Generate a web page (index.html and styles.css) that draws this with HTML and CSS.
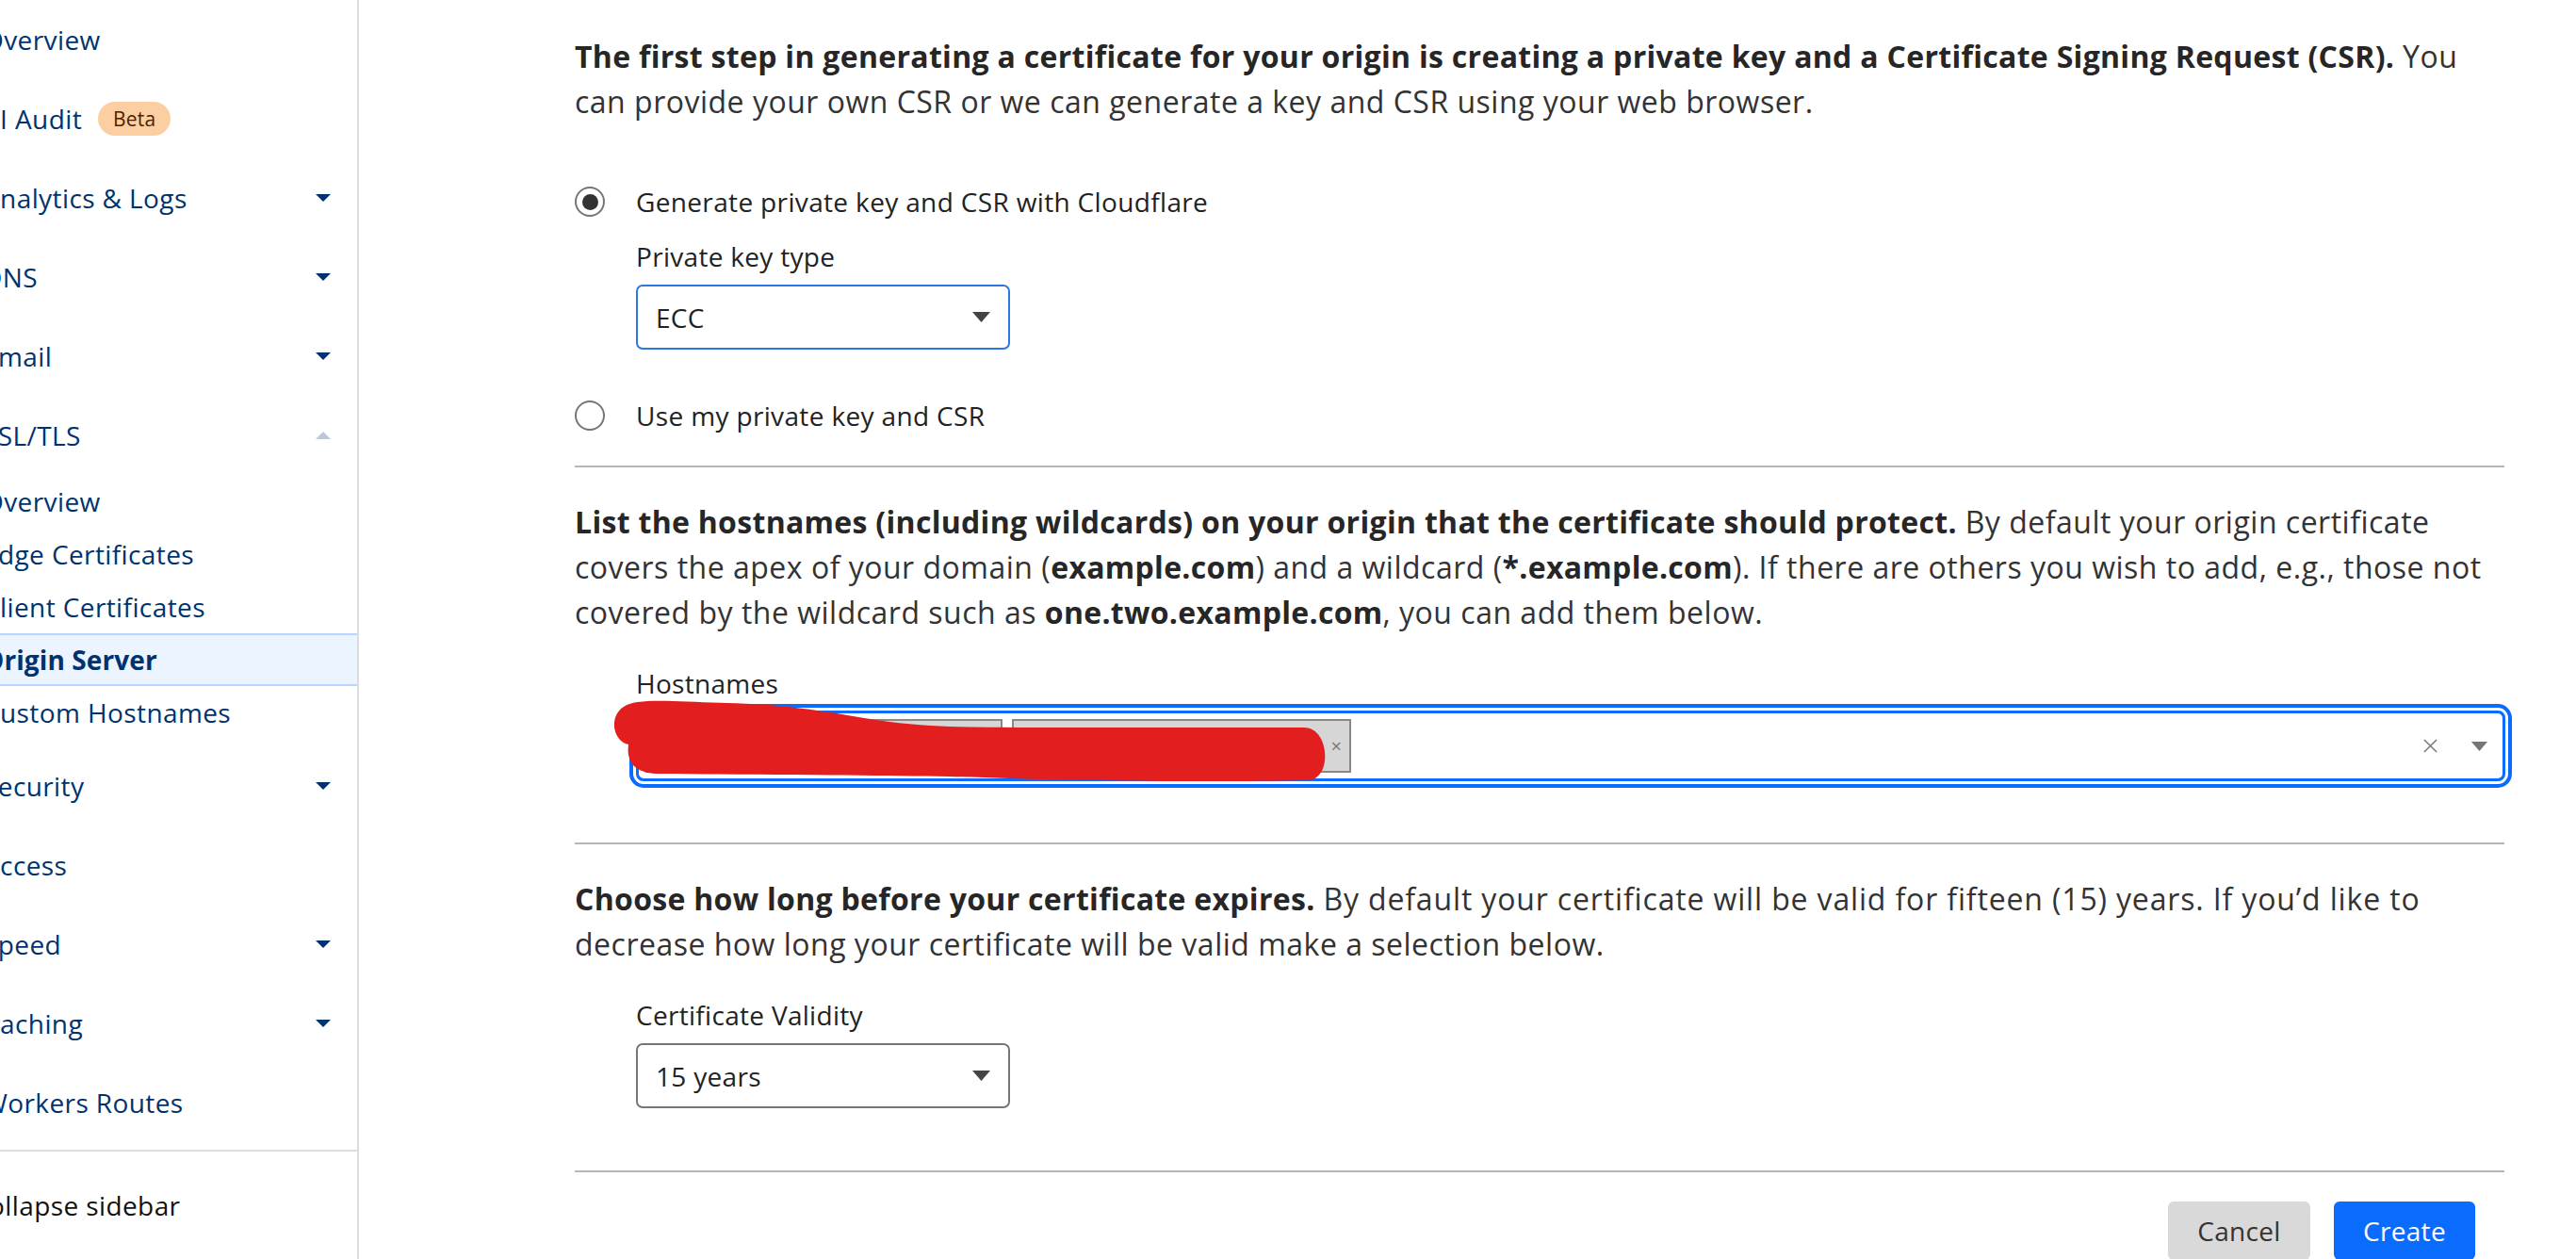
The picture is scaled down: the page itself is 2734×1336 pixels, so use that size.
FILE: index.html
```html
<!DOCTYPE html>
<html lang="en">
<head>
<meta charset="utf-8">
<title>Origin Server</title>
<link rel="stylesheet" href="styles.css">
</head>
<body>
<div class="app">
  <aside class="sidebar">
    <nav class="nav">
      <div class="nav-item"><span class="nav-label">Overview</span></div>
      <div class="nav-item"><span class="nav-label">AI Audit<span class="badge">Beta</span></span></div>
      <div class="nav-item"><span class="nav-label">Analytics &amp; Logs</span><svg class="caret" viewBox="0 0 16 8"><polygon points="0,0 16,0 8,8"/></svg></div>
      <div class="nav-item"><span class="nav-label">DNS</span><svg class="caret" viewBox="0 0 16 8"><polygon points="0,0 16,0 8,8"/></svg></div>
      <div class="nav-item"><span class="nav-label">Email</span><svg class="caret" viewBox="0 0 16 8"><polygon points="0,0 16,0 8,8"/></svg></div>
      <div class="nav-item"><span class="nav-label">SSL/TLS</span><svg class="caret caret-up" viewBox="0 0 16 8"><polygon points="0,8 16,8 8,0"/></svg></div>
      <div class="subnav">
        <div class="sub-item"><span class="nav-label">Overview</span></div>
        <div class="sub-item"><span class="nav-label">Edge Certificates</span></div>
        <div class="sub-item"><span class="nav-label">Client Certificates</span></div>
        <div class="sub-item active"><span class="nav-label">Origin Server</span></div>
        <div class="sub-item"><span class="nav-label">Custom Hostnames</span></div>
      </div>
      <div class="nav-item"><span class="nav-label">Security</span><svg class="caret" viewBox="0 0 16 8"><polygon points="0,0 16,0 8,8"/></svg></div>
      <div class="nav-item"><span class="nav-label">Access</span></div>
      <div class="nav-item"><span class="nav-label">Speed</span><svg class="caret" viewBox="0 0 16 8"><polygon points="0,0 16,0 8,8"/></svg></div>
      <div class="nav-item"><span class="nav-label">Caching</span><svg class="caret" viewBox="0 0 16 8"><polygon points="0,0 16,0 8,8"/></svg></div>
      <div class="nav-item"><span class="nav-label">Workers Routes</span></div>
    </nav>
    <div class="sidebar-foot">
      <div class="nav-item collapse"><span class="nav-label">Collapse sidebar</span></div>
    </div>
  </aside>

  <main class="main">
    <div class="content">
      <p class="para"><strong>The first step in generating a certificate for your origin is creating a private key and a Certificate Signing Request (CSR).</strong> You can provide your own CSR or we can generate a key and CSR using your web browser.</p>

      <div class="radio-row first-radio">
        <span class="radio checked"></span>
        <span class="radio-label">Generate private key and CSR with Cloudflare</span>
      </div>
      <div class="field key-field">
        <div class="field-label">Private key type</div>
        <div class="select select-focus">
          <span class="select-value">ECC</span>
          <svg class="select-arrow" viewBox="0 0 19 11"><polygon points="0,0 19,0 9.5,11"/></svg>
        </div>
      </div>
      <div class="radio-row second-radio">
        <span class="radio"></span>
        <span class="radio-label">Use my private key and CSR</span>
      </div>

      <div class="divider div-1"></div>

      <p class="para para-gap"><strong>List the hostnames (including wildcards) on your origin that the certificate should protect.</strong> By default your origin certificate covers the apex of your domain (<strong>example.com</strong>) and a wildcard (<strong>*.example.com</strong>). If there are others you wish to add, e.g., those not covered by the wildcard such as <strong>one.two.example.com</strong>, you can add them below.</p>

      <div class="field host-field">
        <div class="field-label">Hostnames</div>
        <div class="multi-wrap">
          <div class="multi">
            <div class="chips">
              <span class="chip chip-a"></span>
              <span class="chip chip-b"><span class="chip-x">×</span></span>
            </div>
            <div class="multi-icons">
              <svg class="clear-x" viewBox="0 0 16 16"><path d="M1 1 L15 15 M15 1 L1 15"/></svg>
              <svg class="multi-arrow" viewBox="0 0 19 11"><polygon points="0,0 19,0 9.5,11"/></svg>
            </div>
          </div>
          <svg class="redact" viewBox="640 735 780 105" aria-hidden="true">
            <path d="M 662 750 C 676 740 720 745 770 746 C 830 747 870 754 930 764 C 990 773 1030 771 1080 772 L 1384 772 C 1412 772 1414 828 1388 828 C 1300 830 1160 829 1070 826 C 1000 823 900 823 700 821 C 678 821 664 812 667 790 C 650 786 646 760 662 750 Z"/>
          </svg>
        </div>
      </div>

      <div class="divider div-2"></div>

      <p class="para para-gap"><strong>Choose how long before your certificate expires.</strong> <span class="wide">By default your certificate will be valid for fifteen (15) years. If you’d like to</span> decrease how long your certificate will be valid make a selection below.</p>

      <div class="field validity-field">
        <div class="field-label">Certificate Validity</div>
        <div class="select">
          <span class="select-value">15 years</span>
          <svg class="select-arrow" viewBox="0 0 19 11"><polygon points="0,0 19,0 9.5,11"/></svg>
        </div>
      </div>

      <div class="divider div-3"></div>

      <div class="actions">
        <button class="btn btn-cancel">Cancel</button>
        <button class="btn btn-create">Create</button>
      </div>
    </div>
  </main>
</div>
</body>
</html>
```

FILE: styles.css
```css
* { box-sizing: border-box; }

html, body {
  margin: 0;
  padding: 0;
  height: 100%;
}

body {
  font-family: "Open Sans", "Noto Sans", sans-serif;
  background: #ffffff;
  overflow: hidden;
}

.app {
  display: flex;
  height: 1336px;
}

/* ---------- Sidebar ---------- */
.sidebar {
  width: 381px;
  flex: none;
  border-right: 2px solid #dcdcdc;
  overflow: hidden;
  display: flex;
  flex-direction: column;
}

.nav {
  display: flex;
  flex-direction: column;
}

.nav-item {
  height: 84px;
  display: flex;
  align-items: center;
  justify-content: space-between;
  padding-right: 28px;
  font-size: 28px;
  color: #00336e;
  white-space: nowrap;
}

.nav-label {
  margin-left: -18px;
  display: flex;
  align-items: center;
  letter-spacing: 0.4px;
}

.badge {
  margin-left: 17px;
  height: 36px;
  padding: 0 16px;
  border-radius: 18px;
  background: #fbcfa1;
  color: #4a2200;
  font-size: 21px;
  letter-spacing: 0.2px;
  display: inline-flex;
  align-items: center;
}

.caret {
  width: 16px;
  height: 8px;
  flex: none;
  fill: #00336e;
}

.caret-up {
  fill: #bcc8d8;
}

.subnav {
  display: flex;
  flex-direction: column;
  padding-bottom: 8px;
}

.sub-item {
  height: 56px;
  display: flex;
  align-items: center;
  font-size: 28px;
  color: #00336e;
  white-space: nowrap;
}

.sub-item.active {
  background: #ebf4ff;
  border-top: 2px solid #b7d5ff;
  border-bottom: 2px solid #b7d5ff;
  font-weight: 700;
}

.sub-item.active .nav-label {
  letter-spacing: 0.1px;
}

.sidebar-foot {
  margin-top: 8px;
  border-top: 2px solid #dcdcdc;
  padding-top: 15px;
}

.collapse {
  color: #111111;
}

.collapse .nav-label {
  margin-left: -30px;
}

/* ---------- Main ---------- */
.main {
  flex: 1;
  min-width: 0;
  padding: 36px 76px 0 229px;
}

.content {
  display: flex;
  flex-direction: column;
}

.para {
  margin: 0;
  font-size: 32px;
  line-height: 48px;
  color: #333333;
  letter-spacing: 0.5px;
}

.para strong {
  color: #262626;
  font-weight: 700;
  letter-spacing: 0.3px;
}

.para .wide {
  letter-spacing: 0.85px;
}

.para-gap {
  margin-top: 34px;
}

.radio-row {
  display: flex;
  align-items: center;
  gap: 33px;
  height: 48px;
}

.first-radio { margin-top: 58px; }
.second-radio { margin-top: 46px; }

.radio {
  width: 32px;
  height: 32px;
  flex: none;
  border: 2px solid #767676;
  border-radius: 50%;
  display: flex;
  align-items: center;
  justify-content: center;
}

.radio.checked::after {
  content: "";
  width: 17px;
  height: 17px;
  border-radius: 50%;
  background: #333333;
}

.radio-label {
  font-size: 28px;
  color: #222222;
  letter-spacing: 0.35px;
}

.field {
  margin-left: 65px;
  display: flex;
  flex-direction: column;
}

.key-field { margin-top: 14px; }
.host-field { margin-top: 31px; }
.validity-field { margin-top: 31px; }

.field-label {
  font-size: 28px;
  line-height: 40px;
  color: #222222;
  letter-spacing: 0.3px;
  margin-bottom: 10px;
}

.host-field .field-label {
  margin-bottom: 9px;
}

.select {
  width: 397px;
  height: 69px;
  border: 2px solid #767676;
  border-radius: 7px;
  display: flex;
  align-items: center;
  justify-content: space-between;
  padding: 0 19px 0 19px;
}

.select-focus {
  border-color: #2b78e4;
}

.select-value {
  font-size: 28px;
  color: #222222;
  letter-spacing: 0.3px;
}

.select-arrow {
  width: 19px;
  height: 11px;
  fill: #444444;
}

/* Hostnames multi-select */
.multi-wrap {
  position: relative;
}

.multi {
  height: 75px;
  margin-right: -1px;
  border: 3px solid #0a6cff;
  border-radius: 8px;
  box-shadow: 0 0 0 3px #ffffff, 0 0 0 7px #0a6cff;
  display: flex;
  align-items: center;
  justify-content: space-between;
  padding: 0 15px 0 7px;
}

.chips {
  display: flex;
  gap: 10px;
}

.chip {
  height: 57px;
  background: #d6d6d6;
  border: 2px solid #888888;
  display: flex;
  align-items: center;
  justify-content: flex-end;
  padding-right: 8px;
}

.chip-a { width: 379px; }
.chip-b { width: 360px; }

.chip-x {
  font-size: 20px;
  color: #777777;
  line-height: 1;
}

.multi-icons {
  display: flex;
  align-items: center;
  gap: 35px;
}

.clear-x {
  width: 15px;
  height: 15px;
  stroke: #777777;
  stroke-width: 1.6;
  fill: none;
}

.multi-arrow {
  width: 19px;
  height: 10px;
  fill: #777777;
}

.redact {
  position: absolute;
  left: -35px;
  top: -19px;
  width: 780px;
  height: 105px;
  fill: #e31e1f;
}

/* Dividers */
.divider {
  height: 2px;
  background: #b5b5b5;
}

.div-1 { margin-top: 29px; }
.div-2 { margin-top: 65px; }
.div-3 { margin-top: 66px; }

/* Buttons */
.actions {
  display: flex;
  justify-content: flex-end;
  gap: 25px;
  padding-right: 31px;
  margin-top: 31px;
}

.btn {
  height: 62px;
  border: 0;
  border-radius: 6px;
  font-family: inherit;
  font-size: 28px;
  letter-spacing: 0.3px;
  padding: 0;
}

.btn-cancel {
  width: 151px;
  background: #d9d9d9;
  color: #333333;
}

.btn-create {
  width: 150px;
  background: #0a6cff;
  color: #ffffff;
}
```
